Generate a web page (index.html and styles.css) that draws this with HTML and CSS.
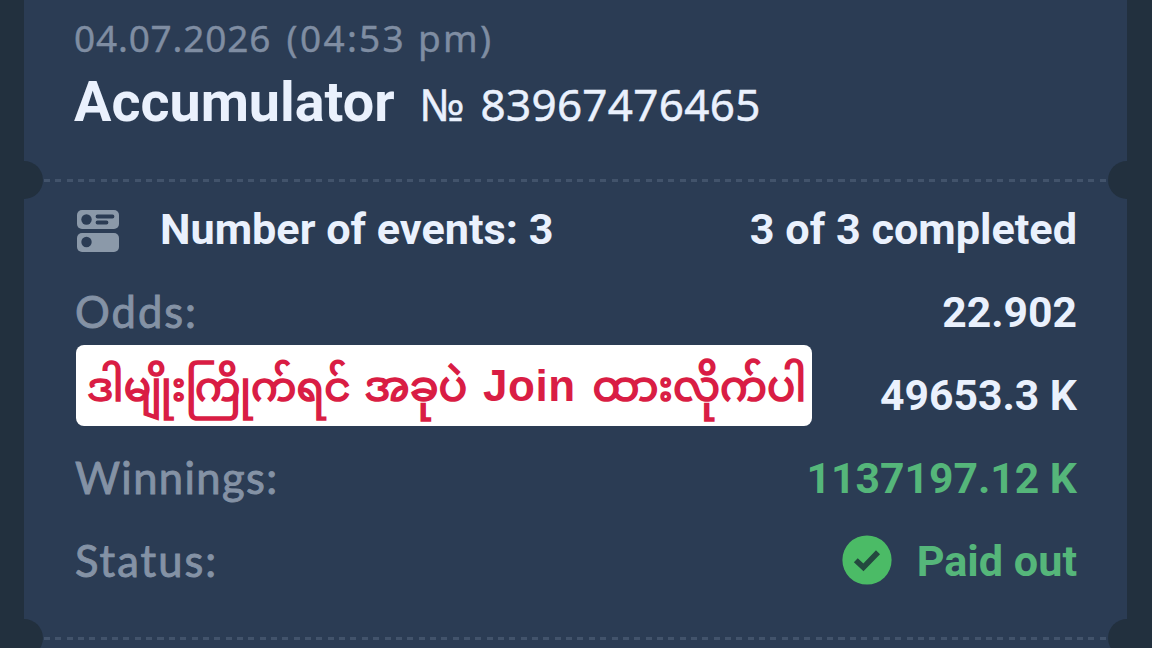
FILE: index.html
```html
<!DOCTYPE html>
<html lang="en">
<head>
    <meta charset="UTF-8">
    <meta name="viewport" content="width=device-width, initial-scale=1.0">
    <title>Accumulator</title>
    <link rel="stylesheet" href="styles.css">
</head>
<body>
    <main class="ticket">
        <header class="ticket-header">
            <p class="date"><span class="day">04.07.2026</span> <span class="time">(04:53 pm)</span></p>
            <div class="title">
                <h1>Accumulator</h1>
                <p class="number"><span class="numero">№</span> 83967476465</p>
            </div>
        </header>
        <div class="divider"></div>
        <section class="details">
            <div class="row">
                <div class="events">
                    <svg class="events-icon" width="42" height="42" viewBox="0 0 42 42">
                        <rect x="0" y="0" width="42" height="19" rx="5" fill="#8b99a9"/>
                        <rect x="0" y="23" width="42" height="19" rx="5" fill="#8b99a9"/>
                        <circle cx="9.5" cy="9.5" r="5.2" fill="#2b3c54"/>
                        <circle cx="9.5" cy="32" r="5.2" fill="#2b3c54"/>
                        <path d="M20.5 6.5H35.5M20.5 12.5H29.5" stroke="#2b3c54" stroke-width="3.8" stroke-linecap="round"/>
                    </svg>
                    <p class="value events-count">Number of events: 3</p>
                </div>
                <p class="value completed">3 of 3 completed</p>
            </div>
            <div class="row">
                <p class="label odds">Odds:</p>
                <p class="value odds-value">22.902</p>
            </div>
            <div class="row">
                <p class="banner" lang="my"><span class="my-first">ဒါမျိုးကြိုက်ရင်</span> <span class="my-second">အခုပဲ</span> <b class="join">Join</b> <span class="my-third">ထားလိုက်ပါ</span></p>
                <p class="value stake">49653.3 K</p>
            </div>
            <div class="row">
                <p class="label winnings">Winnings:</p>
                <p class="value green win-value">1137197.12 K</p>
            </div>
            <div class="row">
                <p class="label status">Status:</p>
                <div class="paid">
                    <svg class="paid-icon" width="50" height="50" viewBox="0 0 50 50">
                        <circle cx="25" cy="25" r="24.6" fill="#4bbb66"/>
                        <path d="M13.8 25.2L21.4 32.4L36 17.2" fill="none" stroke="#24483f" stroke-width="5.6"/>
                    </svg>
                    <p class="value green paid-text">Paid out</p>
                </div>
            </div>
        </section>
        <div class="divider"></div>
    </main>
</body>
</html>
```
FILE: styles.css
```css
* {
    margin: 0;
    padding: 0;
    box-sizing: border-box;
}
body {
    height: 648px;
    overflow: hidden;
    background-color: #22303e;
    font-family: Roboto, "Liberation Sans", sans-serif;
}
.ticket {
    width: 1103px;
    height: 648px;
    margin-left: 24px;
    background-color: #2b3c54;
    overflow: hidden;
}
.ticket-header {
    height: 161px;
    padding: 13px 50px 0;
}
.date {
    font-family: "Noto Sans", sans-serif;
    font-size: 37px;
    line-height: 50px;
    letter-spacing: 0.8px;
    word-spacing: 5px;
    color: #7f8da2;
    -webkit-text-stroke: 0.4px #7f8da2;
    white-space: nowrap;
}
.time {
    letter-spacing: 2.3px;
    word-spacing: 0;
}
.title {
    display: flex;
    align-items: baseline;
    gap: 25px;
    margin-top: 1px;
    line-height: 76px;
    color: #eaf1fd;
    white-space: nowrap;
}
h1 {
    font-size: 55.7px;
    font-weight: 700;
}
.number {
    font-family: "Noto Sans", sans-serif;
    font-size: 44px;
    letter-spacing: 0.3px;
    word-spacing: 4px;
    -webkit-text-stroke: 0.5px #eaf1fd;
}

/* perforation with a half circle cut at each side */
.divider {
    display: flex;
    align-items: center;
    justify-content: space-between;
    height: 38px;
    background: repeating-linear-gradient(to right,
    #42536b 0, #42536b 6px,
    transparent 6px, transparent 11.35px) 20px 50% / 1064px 3px no-repeat;
}
.divider::before,
.divider::after {
    content: "";
    width: 19px;
    height: 38px;
    background-color: #22303e;
    border-radius: 0 19px 19px 0;
}
.divider::after {
    border-radius: 19px 0 0 19px;
}

.details {
    height: 432px;
    margin-top: -12px;
    padding: 0 50px 0 51px;
}
.row {
    display: flex;
    justify-content: space-between;
    align-items: center;
    height: 83px;
    white-space: nowrap;
}
.events {
    display: flex;
    align-items: center;
    gap: 41px;
    padding-left: 2px;
}
.events-icon {
    margin-top: 4px;
}
.value {
    font-size: 43.2px;
    font-weight: 700;
    color: #eaf1fd;
}
.events-count,
.completed,
.paid-text {
    padding-top: 2px;
}
.odds-value,
.stake,
.win-value {
    font-size: 42.7px;
}
.label {
    font-family: Lato, sans-serif;
    font-size: 43.5px;
    letter-spacing: 2px;
    line-height: 50px;
    margin-top: -2px;
    color: #8492a5;
    -webkit-text-stroke: 0.9px #8492a5;
}
.winnings {
    letter-spacing: 1.4px;
}
.green {
    color: #55b67a;
}
.banner {
    align-self: flex-start;
    width: 736px;
    height: 81px;
    margin: -8px 0 0 1px;
    padding-left: 11px;
    border-radius: 8px;
    background-color: #fff;
    color: #d91d44;
    font-family: "Noto Sans", "Noto Sans Myanmar", Padauk, sans-serif;
    font-size: 41px;
    line-height: 78px;
}
.my-first,
.my-second,
.my-third {
    -webkit-text-stroke: 1.6px #d91d44;
}
.my-first {
    font-size: 40.4px;
    margin-right: 3px;
}
.my-second {
    font-size: 42.6px;
}
.my-third {
    font-size: 41.8px;
    margin-left: 6px;
}
.join {
    margin-left: 5px;
    font-family: "Liberation Sans", sans-serif;
    font-size: 44px;
    letter-spacing: 0.6px;
}
.paid {
    display: flex;
    align-items: center;
    gap: 25px;
}
.paid-icon {
    margin-top: -2px;
}
```
